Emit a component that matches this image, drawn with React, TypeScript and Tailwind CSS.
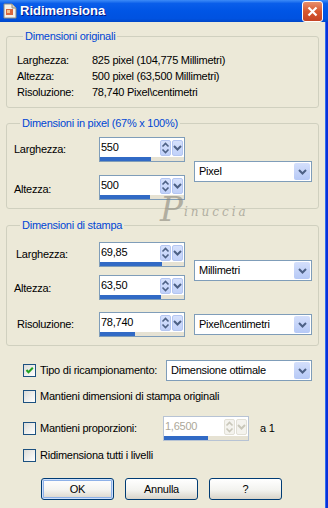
import React from 'react';

const ARROW = '#4D6185';

function Chevron({ color = ARROW }: { color?: string }) {
  return (
    <svg width="9" height="6" viewBox="0 0 9 6">
      <path d="M1 1L4.5 4.5L8 1" fill="none" stroke={color} strokeWidth="2" />
    </svg>
  );
}

function UpDown({ color = ARROW }: { color?: string }) {
  return (
    <svg width="9" height="14" viewBox="0 0 9 14">
      <path d="M1.5 5.5L4.5 2.5L7.5 5.5" fill="none" stroke={color} strokeWidth="1.6" />
      <path d="M1.5 8.5L4.5 11.5L7.5 8.5" fill="none" stroke={color} strokeWidth="1.6" />
    </svg>
  );
}

function SpinBox({ value, fill, disabled = false }: { value: string; fill: string; disabled?: boolean }) {
  const btn = disabled
    ? 'bg-[#F4F3EE] border-[#E2E0D6]'
    : 'bg-[linear-gradient(180deg,#D6E1FC_0%,#C1D1F9_100%)] border-[#B4C6F2]';
  const arrow = disabled ? '#C9C7BA' : ARROW;
  return (
    <div className={`w-[86px] h-[25px] border bg-white flex flex-col ${disabled ? 'border-[#B7C3D4]' : 'border-[#7F9DB9]'}`}>
      <div className="flex h-[19px]">
        <span className={`flex-1 pl-[1px] leading-[18px] ${disabled ? 'text-[#ACA899]' : 'text-black'}`}>{value}</span>
        <div className="flex gap-[1px] pt-[2px] pr-[1px]">
          <span className={`w-[11px] h-[16px] rounded-[2px] border flex items-center justify-center ${btn}`}>
            <UpDown color={arrow} />
          </span>
          <span className={`w-[11px] h-[16px] rounded-[2px] border flex items-center justify-center ${btn}`}>
            <Chevron color={arrow} />
          </span>
        </div>
      </div>
      <div className="h-[4px] bg-[#E6E2D3]">
        <div className={`h-full bg-[#316AC5] ${fill}`} />
      </div>
    </div>
  );
}

function Combo({ label, width }: { label: string; width: string }) {
  return (
    <div className={`${width} h-[21px] border border-[#7F9DB9] bg-white flex items-stretch p-[1px]`}>
      <span className="flex-1 pl-[3px] leading-[17px]">{label}</span>
      <span className="w-[16px] rounded-[2px] bg-[linear-gradient(180deg,#D4DFFB_0%,#B6C9F6_100%)] flex items-center justify-center">
        <Chevron />
      </span>
    </div>
  );
}

function Checkbox({ checked = false }: { checked?: boolean }) {
  return (
    <span className="w-[13px] h-[13px] border border-[#1C5180] bg-[linear-gradient(135deg,#DCDCD7_0%,#FFFFFF_100%)] flex items-center justify-center shrink-0">
      {checked && (
        <svg width="9" height="9" viewBox="0 0 9 9">
          <path d="M1.5 4L3.5 6.3L7.8 1.8" fill="none" stroke="#21A121" strokeWidth="2" />
        </svg>
      )}
    </span>
  );
}

function Group({ title, children, className = '' }: { title: string; children: React.ReactNode; className?: string }) {
  return (
    <fieldset className={`border border-[#D0D0BF] rounded-[3px] w-[313px] ${className}`}>
      <legend className="ml-[6px] px-[2px] leading-[13px] text-[#0046D5]">{title}</legend>
      {children}
    </fieldset>
  );
}

function Button({ label, primary = false }: { label: string; primary?: boolean }) {
  return (
    <button
      className={`w-[73px] h-[22px] rounded-[3px] border border-[#003C74] bg-[linear-gradient(180deg,#FFFFFF_0%,#F3F3EF_55%,#D8D4C9_100%)] text-black ${
        primary ? 'shadow-[inset_0_0_0_1px_#CEE0FB,inset_0_0_0_2px_#8DB1E8]' : ''
      }`}
    >
      {label}
    </button>
  );
}

function TitleIcon() {
  return (
    <svg width="16" height="16" viewBox="0 0 16 16">
      <path d="M2 1h8l4 4v10H2z" fill="#F4F1E8" stroke="#8E8B80" />
      <rect x="4" y="6" width="7" height="6" fill="#D9673E" />
      <rect x="5" y="7" width="3" height="3" fill="#F2C48D" />
      <path d="M10 1v4h4" fill="#D8D4C8" stroke="#8E8B80" />
    </svg>
  );
}

export default function App() {
  return (
    <div className="w-[328px] h-[508px] bg-[#ECE9D8] flex flex-col overflow-hidden font-['Liberation_Sans',Arial,sans-serif] text-[11px] tracking-[-0.25px] text-black">
      {/* title bar */}
      <div className="h-[22px] shrink-0 flex items-center pl-[2px] pr-[5px] bg-[linear-gradient(180deg,#3D8BF7_0%,#0A5EEA_16%,#0055E5_50%,#0052E0_85%,#0047C8_100%)]">
        <TitleIcon />
        <span className="ml-[2px] flex-1 text-white font-bold text-[13px] tracking-normal [text-shadow:1px_1px_0_#0A1883]">
          Ridimensiona
        </span>
        <span className="w-[21px] h-[21px] rounded-[3px] border border-white bg-[linear-gradient(180deg,#E88E6C_0%,#D7582F_50%,#C44425_100%)] flex items-center justify-center">
          <svg width="11" height="11" viewBox="0 0 11 11">
            <path d="M1.5 1.5L9.5 9.5M9.5 1.5L1.5 9.5" stroke="white" strokeWidth="2.2" />
          </svg>
        </span>
      </div>

      <div className="flex flex-1">
        <div className="relative flex-1 pl-[6px] pt-[8px]">
          <Group title="Dimensioni originali" className="pl-[10px] pt-[9px] pb-[7px]">
            <div className="grid grid-cols-[75px_1fr] leading-[16px]">
              <span>Larghezza:</span>
              <span>825 pixel (104,775 Millimetri)</span>
              <span>Altezza:</span>
              <span>500 pixel (63,500 Millimetri)</span>
              <span>Risoluzione:</span>
              <span>78,740 Pixel\centimetri</span>
            </div>
          </Group>

          <Group title="Dimensioni in pixel (67% x 100%)" className="mt-[9px] pl-[7px] pt-[7px] pb-[8px]">
            <div className="flex">
              <div className="flex flex-col gap-[13px]">
                <div className="flex items-center">
                  <span className="w-[85px]">Larghezza:</span>
                  <SpinBox value="550" fill="w-[51px]" />
                </div>
                <div className="flex items-center">
                  <span className="w-[85px] pt-[3px]">Altezza:</span>
                  <SpinBox value="500" fill="w-[50px]" />
                </div>
              </div>
              <div className="ml-[9px] mt-[24px]">
                <Combo label="Pixel" width="w-[118px]" />
              </div>
            </div>
          </Group>

          <Group title="Dimensioni di stampa" className="mt-[10px] pl-[7px] pt-[10px] pb-[8px]">
            <div className="flex">
              <div className="flex flex-col gap-[8px]">
                <div className="flex items-center">
                  <span className="w-[85px] pl-[2px]">Larghezza:</span>
                  <SpinBox value="69,85" fill="w-[62px]" />
                </div>
                <div className="flex items-center">
                  <span className="w-[85px] pt-[1px]">Altezza:</span>
                  <SpinBox value="63,50" fill="w-[61px]" />
                </div>
              </div>
              <div className="ml-[9px] mt-[18px]">
                <Combo label="Millimetri" width="w-[118px]" />
              </div>
            </div>
            <div className="flex mt-[12px]">
              <div className="flex items-center">
                <span className="w-[85px] pl-[3px]">Risoluzione:</span>
                <SpinBox value="78,740" fill="w-[35px]" />
              </div>
              <div className="ml-[9px] mt-[2px]">
                <Combo label="Pixel\centimetri" width="w-[118px]" />
              </div>
            </div>
          </Group>

          <div className="pl-[17px]">
            <div className="mt-[14px] flex items-center">
              <div className="w-[143px] flex items-center gap-[4px]">
                <Checkbox checked />
                <span>Tipo di ricampionamento:</span>
              </div>
              <Combo label="Dimensione ottimale" width="w-[146px]" />
            </div>
            <div className="mt-[7px] h-[16px] flex items-center gap-[4px]">
              <Checkbox />
              <span>Mantieni dimensioni di stampa originali</span>
            </div>
            <div className="mt-[12px] flex items-center">
              <div className="w-[140px] flex items-center gap-[4px]">
                <Checkbox />
                <span>Mantieni proporzioni:</span>
              </div>
              <SpinBox value="1,6500" fill="w-[44px]" disabled />
              <span className="ml-[11px]">a 1</span>
            </div>
            <div className="mt-[6px] h-[16px] flex items-center gap-[4px]">
              <Checkbox />
              <span>Ridimensiona tutti i livelli</span>
            </div>
          </div>

          <div className="mt-[15px] pl-[35px] flex gap-[11px]">
            <Button label="OK" primary />
            <Button label="Annulla" />
            <Button label="?" />
          </div>

          {/* signature watermark */}
          <div className="absolute left-[160px] top-[170px] flex items-end italic text-[#8A877C] opacity-60 font-['DejaVu_Serif',serif] tracking-normal pointer-events-none">
            <span className="text-[34px] leading-[34px] font-light">P</span>
            <span className="text-[12px] tracking-[3px] mb-[5px] ml-[1px]">inuccia</span>
          </div>
        </div>
        <div className="w-[3px] bg-[#0831D9] border-l border-[#2E6BF0]" />
      </div>
    </div>
  );
}
